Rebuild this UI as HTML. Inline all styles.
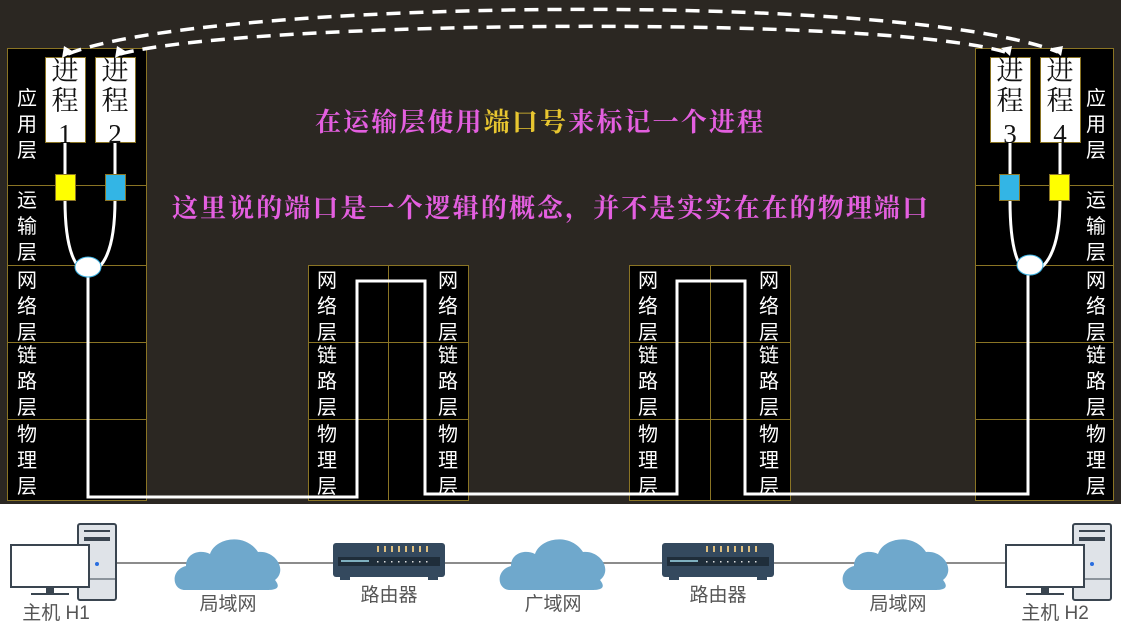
<!DOCTYPE html>
<html><head><meta charset="utf-8"><style>
html,body{margin:0;padding:0;width:1121px;height:627px;overflow:hidden;background:#fff}
svg{display:block}
.lab{font-family:"Liberation Sans","Noto Sans CJK SC",sans-serif;font-size:20px;fill:#fff}
.pr{font-family:"Liberation Serif","Noto Serif CJK SC",serif;font-size:27px;fill:#111}
.cap{font-family:"Liberation Sans","Noto Sans CJK SC",sans-serif;font-size:19px;fill:#555}
.t{font-family:"Liberation Serif","Noto Serif CJK SC",serif;font-size:26px;font-weight:bold}
</style></head><body>
<svg width="1121" height="627" viewBox="0 0 1121 627" xmlns="http://www.w3.org/2000/svg">
<rect x="0" y="0" width="1121" height="504" fill="#2b2722"/>
<g fill="#000" stroke="#8a7424" stroke-width="1">
<rect x="7.5" y="48.5" width="139" height="452"/>
<rect x="975.5" y="48.5" width="138" height="452"/>
<rect x="308.5" y="265.5" width="160" height="235"/>
<rect x="629.5" y="265.5" width="161" height="235"/>
</g>
<g stroke="#8a7424" stroke-width="1">
<line x1="7" y1="185.5" x2="146" y2="185.5"/><line x1="7" y1="265.5" x2="146" y2="265.5"/><line x1="7" y1="342.5" x2="146" y2="342.5"/><line x1="7" y1="419.5" x2="146" y2="419.5"/>
<line x1="975" y1="185.5" x2="1113" y2="185.5"/><line x1="975" y1="265.5" x2="1113" y2="265.5"/><line x1="975" y1="342.5" x2="1113" y2="342.5"/><line x1="975" y1="419.5" x2="1113" y2="419.5"/>
<line x1="308" y1="342.5" x2="468" y2="342.5"/><line x1="308" y1="419.5" x2="468" y2="419.5"/><line x1="388.5" y1="265" x2="388.5" y2="500"/>
<line x1="629" y1="342.5" x2="790" y2="342.5"/><line x1="629" y1="419.5" x2="790" y2="419.5"/><line x1="710.5" y1="265" x2="710.5" y2="500"/>
</g>
<g class="lab" text-anchor="middle">
<text x="27" y="105">应</text><text x="27" y="131">用</text><text x="27" y="157">层</text>
<text x="27" y="207">运</text><text x="27" y="233">输</text><text x="27" y="259">层</text>
<text x="27" y="287">网</text><text x="27" y="313">络</text><text x="27" y="339">层</text>
<text x="27" y="362">链</text><text x="27" y="388">路</text><text x="27" y="414">层</text>
<text x="27" y="441">物</text><text x="27" y="467">理</text><text x="27" y="493">层</text>
<text x="1096" y="105">应</text><text x="1096" y="131">用</text><text x="1096" y="157">层</text>
<text x="1096" y="207">运</text><text x="1096" y="233">输</text><text x="1096" y="259">层</text>
<text x="1096" y="287">网</text><text x="1096" y="313">络</text><text x="1096" y="339">层</text>
<text x="1096" y="362">链</text><text x="1096" y="388">路</text><text x="1096" y="414">层</text>
<text x="1096" y="441">物</text><text x="1096" y="467">理</text><text x="1096" y="493">层</text>
<g id="rl">
<text x="327" y="287">网</text><text x="327" y="313">络</text><text x="327" y="339">层</text>
<text x="327" y="362">链</text><text x="327" y="388">路</text><text x="327" y="414">层</text>
<text x="327" y="441">物</text><text x="327" y="467">理</text><text x="327" y="493">层</text>
<text x="448" y="287">网</text><text x="448" y="313">络</text><text x="448" y="339">层</text>
<text x="448" y="362">链</text><text x="448" y="388">路</text><text x="448" y="414">层</text>
<text x="448" y="441">物</text><text x="448" y="467">理</text><text x="448" y="493">层</text>
</g>
<use href="#rl" x="321"/>
</g>
<g fill="#fff" stroke="#8a7424" stroke-width="1">
<rect x="45.5" y="57.5" width="40" height="85"/><rect x="95.5" y="57.5" width="40" height="85"/>
<rect x="990.5" y="57.5" width="40" height="85"/><rect x="1040.5" y="57.5" width="40" height="85"/>
</g>
<g class="pr" text-anchor="middle">
<text x="65" y="80">进</text><text x="65" y="110">程</text><text x="65" y="143">1</text>
<text x="115" y="80">进</text><text x="115" y="110">程</text><text x="115" y="143">2</text>
<text x="1010" y="80">进</text><text x="1010" y="110">程</text><text x="1010" y="143">3</text>
<text x="1060" y="80">进</text><text x="1060" y="110">程</text><text x="1060" y="143">4</text>
</g>
<g fill="none" stroke="#fff" stroke-width="3">
<path d="M65 143 V200 C65 260 80 272 88 272 C98 272 115 260 115 200 V143"/>
<path d="M1010 143 V200 C1010 260 1022 272 1030 272 C1040 272 1060 260 1060 200 V143"/>
<path d="M88 272 V497 H357 V281 H425 V494 H677 V281 H745 V494 H1028 V272"/>
</g>
<ellipse cx="88" cy="267" rx="13" ry="10" fill="#fff" stroke="#3bb0e0" stroke-width="1"/>
<ellipse cx="1030" cy="265" rx="13" ry="10" fill="#fff" stroke="#3bb0e0" stroke-width="1"/>
<g stroke="#8a7424" stroke-width="1">
<rect x="55.5" y="174.5" width="20" height="26" fill="#ffff00"/>
<rect x="105.5" y="174.5" width="20" height="26" fill="#33b5e5"/>
<rect x="999.5" y="174.5" width="20" height="26" fill="#33b5e5"/>
<rect x="1049.5" y="174.5" width="20" height="26" fill="#ffff00"/>
</g>
<g fill="none" stroke="#fff" stroke-width="3.5" stroke-dasharray="14 9">
<path d="M68 54 C200 0 900 -10 1058 52"/>
<path d="M120 54 C250 20 880 15 1005 52"/>
</g>
<g fill="#fff">
<path d="M62 58 L64 46 L74 52 Z"/><path d="M115 58 L117 46 L127 52 Z"/>
<path d="M1010 56 L1001 48 L1012 46 Z"/><path d="M1061 56 L1052 48 L1063 46 Z"/>
</g>
<text x="315" y="131" class="t" fill="#e45fe0" textLength="448" lengthAdjust="spacing">在运输层使用<tspan fill="#e8c630">端口号</tspan>来标记一个进程</text>
<text x="172" y="217" class="t" fill="#e45fe0" textLength="756" lengthAdjust="spacing">这里说的端口是一个逻辑的概念，并不是实实在在的物理端口</text>
<line x1="110" y1="563" x2="1010" y2="563" stroke="#666" stroke-width="1.5"/>
<g id="pc">
<rect x="78" y="524" width="38" height="76" rx="2" fill="#dfe3e8" stroke="#3a4550" stroke-width="2"/>
<rect x="84" y="530" width="26" height="2" fill="#3a4550"/><rect x="84" y="537" width="26" height="4" fill="#3a4550"/>
<line x1="78" y1="579" x2="116" y2="579" stroke="#3a4550"/>
<circle cx="97" cy="564" r="2" fill="#2a6ee0"/>
<rect x="11" y="545" width="78" height="42" fill="#fff" stroke="#3a4550" stroke-width="2"/>
<rect x="46" y="587" width="8" height="6" fill="#3a4550"/><rect x="31" y="593" width="38" height="2" fill="#3a4550"/>
</g>
<use href="#pc" x="995"/>
<g id="cl" fill="#6fa8cc">
<path d="M185 590 C172 590 170 570 186 566 C186 553 200 549 210 554 C215 538 245 532 258 552 C275 550 288 570 275 580 C283 590 272 590 264 590 Z"/>
</g>
<use href="#cl" x="325"/><use href="#cl" x="668"/>
<g id="rt">
<rect x="333" y="543" width="112" height="34" rx="3" fill="#34495e"/>
<rect x="338" y="557" width="102" height="9" fill="#1f2d3a"/>
<rect x="341" y="560" width="28" height="2" fill="#7fb0c0"/>
<g fill="#e0c080"><rect x="377" y="546" width="2" height="6"/><rect x="384" y="546" width="2" height="6"/><rect x="391" y="546" width="2" height="6"/><rect x="398" y="546" width="2" height="6"/><rect x="405" y="546" width="2" height="6"/><rect x="412" y="546" width="2" height="6"/><rect x="419" y="546" width="2" height="6"/><rect x="426" y="546" width="2" height="6"/></g>
<g fill="#ddd"><rect x="377" y="561" width="1.5" height="1.5"/><rect x="384" y="561" width="1.5" height="1.5"/><rect x="391" y="561" width="1.5" height="1.5"/><rect x="398" y="561" width="1.5" height="1.5"/><rect x="405" y="561" width="1.5" height="1.5"/><rect x="412" y="561" width="1.5" height="1.5"/><rect x="419" y="561" width="1.5" height="1.5"/><rect x="426" y="561" width="1.5" height="1.5"/></g>
<rect x="340" y="577" width="10" height="3" fill="#34495e"/><rect x="428" y="577" width="10" height="3" fill="#34495e"/>
</g>
<use href="#rt" x="329"/>
<g class="cap" text-anchor="middle">
<text x="56" y="619">主机 H1</text><text x="1055" y="619">主机 H2</text>
<text x="228" y="610">局域网</text><text x="389" y="601">路由器</text>
<text x="553" y="610">广域网</text><text x="718" y="601">路由器</text>
<text x="898" y="610">局域网</text>
</g>
</svg>
</body></html>
